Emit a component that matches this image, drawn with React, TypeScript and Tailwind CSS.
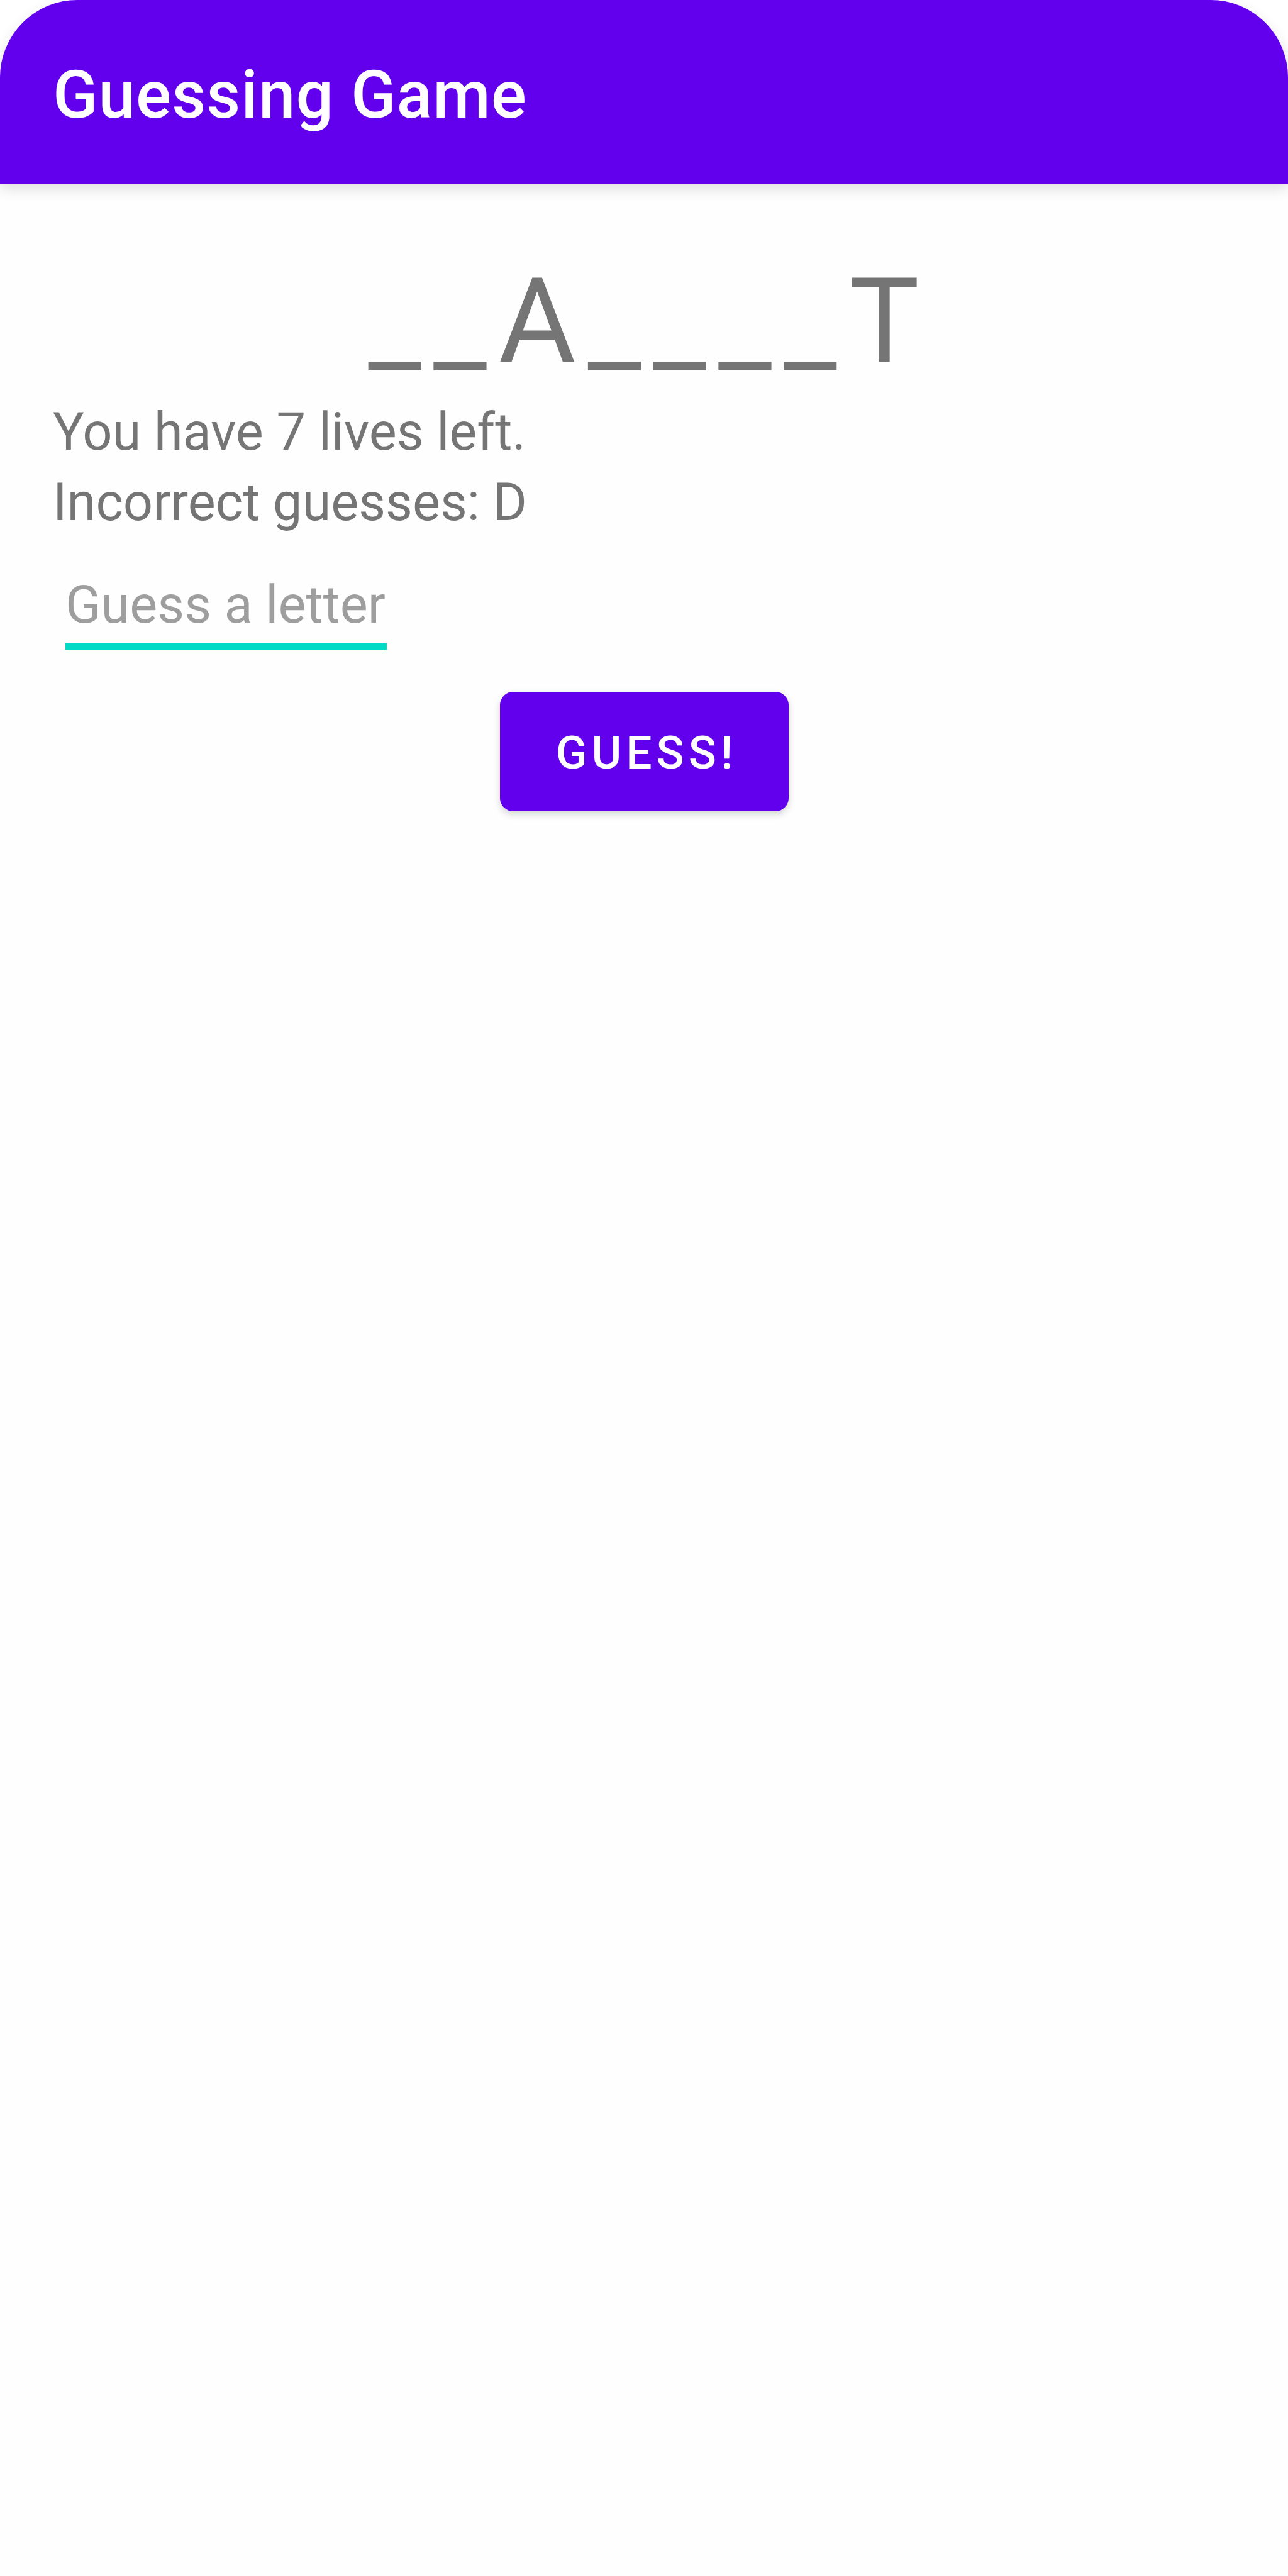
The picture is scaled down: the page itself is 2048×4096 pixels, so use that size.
import { useState } from "react";

export default function App() {
  const [guess, setGuess] = useState("");

  return (
    <div className="flex min-h-screen flex-col bg-[#fefefe] font-[Roboto,sans-serif] text-[83px] leading-[112px] text-[#757575]">
      <div className="bg-white">
        <header className="flex h-[292px] items-center rounded-t-[123px] bg-[#6200ee] px-[84px] pt-3 shadow-[0_8px_22px_rgba(0,0,0,0.13)]">
          <h1 className="text-[105px] leading-[122px] font-medium tracking-[1px] text-white">Guessing Game</h1>
        </header>
      </div>
      <main className="flex flex-col px-[84px] pt-[100px]">
        <p className="pl-[18px] text-center text-[188px] leading-[239px] tracking-[19px]">__A____T</p>
        <p>You have 7 lives left.</p>
        <p>Incorrect guesses: D</p>
        <form className="flex flex-col items-start" onSubmit={(e) => e.preventDefault()}>
          <input
            type="text"
            aria-label="Guess a letter"
            placeholder="Guess a letter"
            maxLength={1}
            value={guess}
            onChange={(e) => setGuess(e.target.value)}
            className="mt-[58px] ml-5 w-[511px] border-b-[11px] border-[#03dac5] bg-transparent pb-3 leading-[97px] outline-none placeholder:text-[#9e9e9e]"
          />
          <button
            type="submit"
            className="mt-[67px] flex h-[190px] w-[459px] items-center justify-center self-center rounded-[21px] bg-[#6200ee] pt-1 pl-2 text-[73px] font-medium tracking-[7px] text-white shadow-[0_5px_12px_rgba(0,0,0,0.16)]"
          >
            GUESS!
          </button>
        </form>
      </main>
    </div>
  );
}
